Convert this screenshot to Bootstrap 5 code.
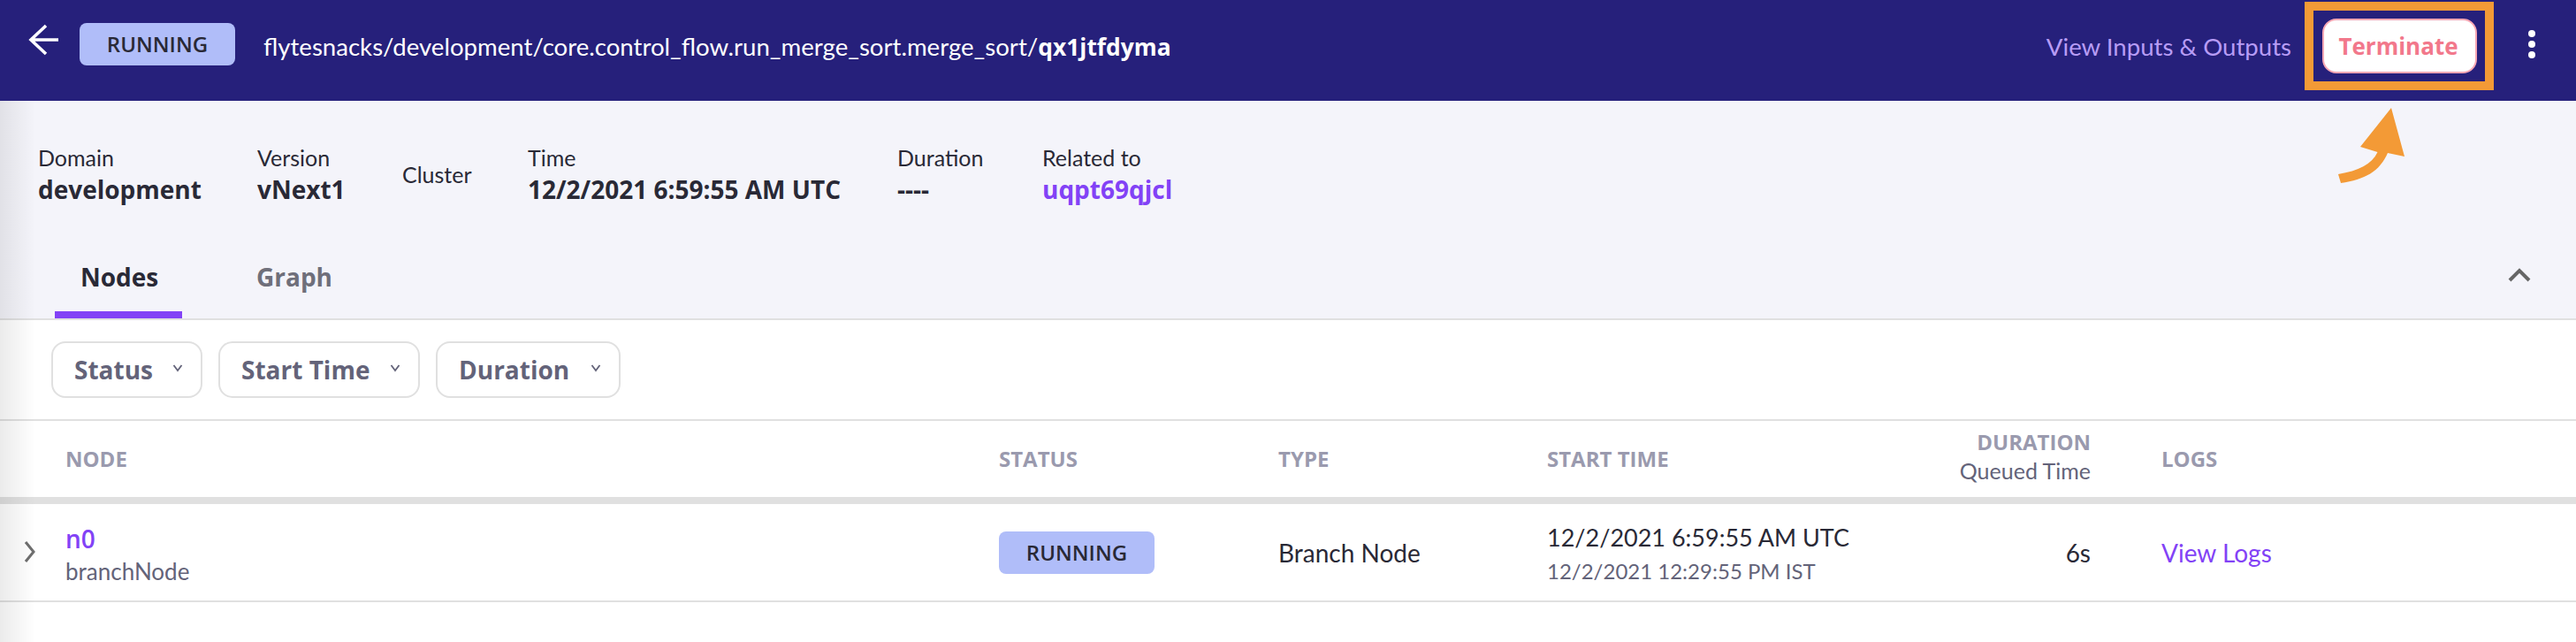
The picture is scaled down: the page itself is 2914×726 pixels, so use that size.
<!DOCTYPE html>
<html lang="en">
<head>
<meta charset="utf-8">
<title>Execution</title>
<link href="https://cdn.jsdelivr.net/npm/bootstrap@5.3.0/dist/css/bootstrap.min.css" rel="stylesheet">
<style>
html,body{height:726px;overflow:hidden}
body{font-family:"Lato","Liberation Sans",sans-serif;color:#292936;background:#fff;position:relative}
.topbar{height:114px;background:#26207b;padding:0 46px 0 30px}
.back-ico{width:36px;height:36px;margin:-24px 24px 0 0}
.phase{background:#b0bdf9;border-radius:8px;color:#292936;font-size:24px;font-weight:600;font-family:"Open Sans",sans-serif;display:flex;align-items:center;justify-content:center}
.phase-top{width:176px;height:48px;margin:0 32px 14px 0}
.phase-row{width:176px;height:48px}
.crumb{font-size:27.6px;color:#fff;line-height:1;margin-bottom:9px}
.crumb b{font-family:"Open Sans",sans-serif;font-weight:700;font-size:26.4px}
.viewio{font-size:27.6px;color:#b79cf5;margin:0 15px 8px 0}
.callout{width:214px;height:100px;border:10px solid #f39a36;margin:1px 39px 12px 0;display:flex;align-items:center;justify-content:center}
.term{width:175px;height:62px;background:#fff;border:2px solid #f7a7b4;border-radius:16px;color:#f2788b;font-family:"Open Sans",sans-serif;font-weight:700;font-size:26px;padding:0 2px 0 0;line-height:1}
.kebab{width:8px;gap:4px;margin-top:-14px}
.kebab i{display:block;width:8px;height:8px;border-radius:50%;background:#fff}
.meta-wrap{background:#f4f4fa;height:246px;position:relative}
.metas{padding:0 0 0 43px;height:114px}
.mi{height:114px;padding-top:47px}
.mi-label{font-size:25px;line-height:34px;color:#292936}
.mi-val{font-family:"Open Sans",sans-serif;font-size:28px;font-weight:700;line-height:38px;color:#292936}
.mi-val a{color:#8242f6;text-decoration:none}
.mi-c{padding-top:66px}
.tabs-row{height:66px;padding-left:62px}
.tabx{font-family:"Open Sans",sans-serif;font-size:28px;font-weight:700;color:#292936;height:66px;line-height:38px}
.tabx.on{border-bottom:8px solid #8242f6;width:144px;padding-left:29px}
.tabx.off{color:#6f6f7a;padding-left:84px}
.rule{height:2px;background:#e0e0e0}
.filters{height:112px;padding:24px 0 0 58px;gap:18px}
.fbtn{height:64px;border:2px solid #e0e0e0;border-radius:16px;background:#fff;color:#636379;font-family:"Open Sans",sans-serif;font-size:28px;font-weight:700;padding:0 20px 0 24px;display:flex;align-items:center;justify-content:space-between}
.fbtn svg{margin-top:-4px}
.thead-row{height:86px;position:relative}
.cols{display:flex}
.c1{width:1130px;padding-left:74px}.c2{width:316px}.c3{width:304px}
.c4a{width:328px;white-space:nowrap}.c4b{width:287px;text-align:right}
.c5{padding-left:80px}
.th{font-family:"Open Sans",sans-serif;font-size:24px;font-weight:700;color:#9a9aae;line-height:1}
.th-sub{font-size:25px;color:#636379;font-weight:400;line-height:36px;padding-top:2px}
.thick{height:8px;background:#e0e0e0}
.row-n{height:109px;position:relative}
.n-name{color:#8242f6;font-size:28px;line-height:38px;font-family:"Open Sans",sans-serif;font-weight:600}
.n-sub{font-size:26px;line-height:36px;color:#636379}
.n-t{font-size:28px;color:#292936}
.n-time{font-size:27px;color:#292936;line-height:42px}
.n-l{font-size:28px;color:#8242f6;text-decoration:none}
.n-s2{font-size:24px;color:#636379;line-height:34px}
.n-node{padding-top:4px}
.chev-r{position:absolute;left:27px;top:41px;width:14px;height:26px}
.edge{position:absolute;left:0;top:114px;bottom:0;width:40px;background:linear-gradient(90deg,rgba(0,0,0,.08),rgba(0,0,0,0));pointer-events:none}
.arrow{position:absolute;left:2640px;top:118px;width:90px;height:94px}
.chev-u{position:absolute;left:2836px;top:302px;width:28px;height:18px}
</style>
</head>
<body>
<header class="topbar d-flex align-items-center">
  <svg class="back-ico flex-shrink-0" viewBox="0 0 36 36"><path d="M36 18H6M22 2 5 18l17 16" fill="none" stroke="#fff" stroke-width="3.6"/></svg>
  <span class="phase phase-top flex-shrink-0">RUNNING</span>
  <div class="crumb flex-grow-1">flytesnacks/development/core.control_flow.run_merge_sort.merge_sort/<b>qx1jtfdyma</b></div>
  <span class="viewio">View Inputs &amp; Outputs</span>
  <div class="callout flex-shrink-0"><button class="term" type="button">Terminate</button></div>
  <div class="kebab d-flex flex-column flex-shrink-0"><i></i><i></i><i></i></div>
</header>
<section class="meta-wrap d-flex flex-column">
  <div class="metas d-flex">
    <div class="mi" style="width:248px"><div class="mi-label">Domain</div><div class="mi-val">development</div></div>
    <div class="mi" style="width:164px"><div class="mi-label">Version</div><div class="mi-val">vNext1</div></div>
    <div class="mi mi-c" style="width:142px"><div class="mi-label">Cluster</div></div>
    <div class="mi" style="width:418px"><div class="mi-label">Time</div><div class="mi-val">12/2/2021 6:59:55 AM UTC</div></div>
    <div class="mi" style="width:164px"><div class="mi-label">Duration</div><div class="mi-val">----</div></div>
    <div class="mi"><div class="mi-label">Related to</div><div class="mi-val"><a href="#">uqpt69qjcl</a></div></div>
  </div>
  <div class="tabs-row d-flex mt-auto">
    <div class="tabx on">Nodes</div>
    <div class="tabx off">Graph</div>
  </div>
</section>
<div class="rule"></div>
<div class="filters d-flex align-items-start">
  <div class="fbtn" style="width:171px"><span>Status</span><svg width="12" height="10" viewBox="0 0 12 10"><path d="M1.500 2 6 8l4.500-6" fill="none" stroke="#636379" stroke-width="1.800"/></svg></div>
  <div class="fbtn" style="width:228px"><span>Start Time</span><svg width="12" height="10" viewBox="0 0 12 10"><path d="M1.500 2 6 8l4.500-6" fill="none" stroke="#636379" stroke-width="1.800"/></svg></div>
  <div class="fbtn" style="width:209px"><span>Duration</span><svg width="12" height="10" viewBox="0 0 12 10"><path d="M1.500 2 6 8l4.500-6" fill="none" stroke="#636379" stroke-width="1.800"/></svg></div>
</div>
<div class="rule"></div>
<div class="thead-row cols align-items-center">
  <div class="c1 th">NODE</div>
  <div class="c2 th">STATUS</div>
  <div class="c3 th">TYPE</div>
  <div class="c4a th">START TIME</div>
  <div class="c4b"><div class="th">DURATION</div><div class="th-sub">Queued Time</div></div>
  <div class="c5 th">LOGS</div>
</div>
<div class="thick"></div>
<div class="row-n cols align-items-center">
  <svg class="chev-r" viewBox="0 0 14 26"><path d="M2 2l9 11-9 11" fill="none" stroke="#6f6f6f" stroke-width="3"/></svg>
  <div class="c1 n-node"><div class="n-name">n0</div><div class="n-sub">branchNode</div></div>
  <div class="c2"><span class="phase phase-row">RUNNING</span></div>
  <div class="c3 n-t">Branch Node</div>
  <div class="c4a"><div class="n-time">12/2/2021 6:59:55 AM UTC</div><div class="n-s2">12/2/2021 12:29:55 PM IST</div></div>
  <div class="c4b n-t">6s</div>
  <div class="c5"><a class="n-l" href="#">View Logs</a></div>
</div>
<div class="rule"></div>
<div class="edge"></div>
<svg class="arrow" viewBox="0 0 90 94"><path d="M65 4 30 48 49.500 54C43 68 28 75 5 79L8 89C35 85 52 76 61 55L80 59Z" fill="#f39a36"/></svg>
<svg class="chev-u" viewBox="0 0 28 18"><path d="M3 15 14 4l11 11" fill="none" stroke="#666" stroke-width="4"/></svg>
</body>
</html>
